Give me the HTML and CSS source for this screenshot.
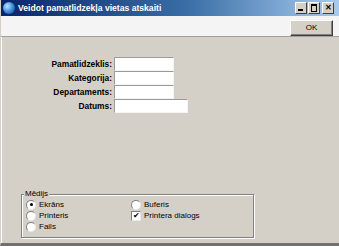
FILE: index.html
```html
<!DOCTYPE html>
<html lang="lv">
<head>
  <meta charset="UTF-8" />
  <title>Veidot pamatlidzekļa vietas atskaiti</title>
  <link rel="stylesheet" href="styles.css">
</head>
<body>
  <div class="window">
    <div class="titlebar">
      <span class="app-icon"></span>
      <span class="title">Veidot pamatlidzekļa vietas atskaiti</span>
      <div class="wbtns">
        <span class="wbtn min"></span>
        <span class="wbtn max"></span>
        <span class="wbtn close">&#x2715;</span>
      </div>
    </div>

    <div class="toolbar">
      <button class="ok">OK</button>
    </div>

    <div class="content">
      <div class="form">
        <label>Pamatlidzeklis:</label><input type="text" />
        <label>Kategorija:</label><input type="text" />
        <label>Departaments:</label><input type="text" />
        <label>Datums:</label><input type="text" class="wide" />
      </div>

      <div class="media">
        <span class="legend">Mēdijs</span>
        <div class="col col-left">
          <div class="opt"><span class="radio on"></span>Ekrāns</div>
          <div class="opt"><span class="radio"></span>Printeris</div>
          <div class="opt"><span class="radio"></span>Fails</div>
        </div>
        <div class="col">
          <div class="opt"><span class="radio"></span>Buferis</div>
          <div class="opt"><span class="check">&#x2714;</span>Printera dialogs</div>
        </div>
      </div>
    </div>
  </div>
</body>
</html>
```

FILE: styles.css
```css
body {
  margin: 0;
  padding: 0;
  background: #d4d0c8;
  font-family: "Liberation Sans", Arial, sans-serif;
}
.window {
  width: 339px;
  height: 246px;
  box-sizing: border-box;
  display: flex;
  flex-direction: column;
  background: #d4d0c8;
  border-left: 1px solid #d4d0c8;
  border-bottom: 3px solid #707070;
  box-shadow: inset 1px 0 0 #fff;
}
.titlebar {
  height: 16px;
  display: flex;
  align-items: center;
  background: linear-gradient(to right, #0a246a 0%, #3a6ea5 55%, #a6caf0 100%);
  color: #fff;
  padding: 0 5px 0 2px;
}
.app-icon {
  width: 12px;
  height: 12px;
  border-radius: 50%;
  background: radial-gradient(circle at 35% 35%, #bfe6ff 0%, #3a8fd6 50%, #0b3c8c 100%);
  margin-right: 3px;
}
.title {
  font-weight: bold;
  font-size: 8.6px;
  flex: 1;
}
.wbtns {
  display: flex;
  gap: 1px;
}
.wbtn {
  width: 10px;
  height: 10px;
  background: #d4d0c8;
  border: 1px solid;
  border-color: #fff #404040 #404040 #fff;
  box-sizing: content-box;
  position: relative;
  color: #000;
  font-size: 8px;
  font-weight: bold;
  line-height: 10px;
  text-align: center;
}
.wbtn.close {
  margin-left: 1px;
}
.wbtn.min::after {
  content: "";
  position: absolute;
  left: 2px;
  bottom: 2px;
  width: 5px;
  height: 2px;
  background: #000;
}
.wbtn.max::after {
  content: "";
  position: absolute;
  left: 2px;
  top: 1px;
  width: 4px;
  height: 5px;
  border: 1px solid #000;
  border-top-width: 2px;
}
.toolbar {
  height: 20px;
  background: #f4f4f4;
  border-bottom: 1px solid #a0a0a0;
  display: flex;
  justify-content: flex-end;
  align-items: center;
  padding-right: 6px;
}
.ok {
  width: 43px;
  height: 16px;
  margin-top: 3px;
  padding: 0;
  font-family: inherit;
  font-size: 8px;
  background: #d4d0c8;
  border: 1px solid;
  border-color: #fff #404040 #404040 #fff;
  box-shadow: inset -1px -1px 0 #808080;
}
.content {
  flex: 1;
  display: flex;
  flex-direction: column;
  padding-top: 20px;
}
.form {
  display: grid;
  grid-template-columns: 111px auto;
  grid-auto-rows: 13px;
  row-gap: 1px;
  column-gap: 2px;
  align-items: center;
}
.form label {
  text-align: right;
  font-weight: bold;
  font-size: 8.4px;
  color: #000;
}
.form input {
  width: 58px;
  height: 12px;
  box-sizing: content-box;
  padding: 0;
  margin: 0;
  background: #fff;
  border: 1px solid;
  border-color: #9a9a9a #f4f4f4 #f4f4f4 #9a9a9a;
}
.form input.wide {
  width: 72px;
}
.media {
  position: relative;
  margin: auto 0 5px 20px;
  width: 227px;
  height: 33px;
  padding: 5px 0 4px 4px;
  border: 1px solid #808080;
  box-shadow: 1px 1px 0 #fff, inset 1px 1px 0 #fff;
  display: flex;
  font-size: 8px;
}
.legend {
  position: absolute;
  left: 2px;
  top: -6px;
  padding: 0 1px;
  background: #d4d0c8;
  font-size: 8px;
  line-height: 10px;
}
.col {
  display: flex;
  flex-direction: column;
  gap: 2px;
}
.col-left {
  width: 105px;
}
.opt {
  display: flex;
  align-items: center;
  height: 9px;
  gap: 3px;
}
.radio {
  width: 8px;
  height: 8px;
  border-radius: 50%;
  background: #fff;
  border: 1px solid;
  border-color: #808080 #e8e8e8 #e8e8e8 #808080;
  box-sizing: content-box;
  position: relative;
}
.radio.on::after {
  content: "";
  position: absolute;
  left: 2.5px;
  top: 2.5px;
  width: 3px;
  height: 3px;
  border-radius: 50%;
  background: #000;
}
.check {
  width: 8px;
  height: 8px;
  background: #fff;
  border: 1px solid;
  border-color: #808080 #e8e8e8 #e8e8e8 #808080;
  box-sizing: content-box;
  font-size: 8px;
  line-height: 8px;
  text-align: center;
  color: #000;
}
```
